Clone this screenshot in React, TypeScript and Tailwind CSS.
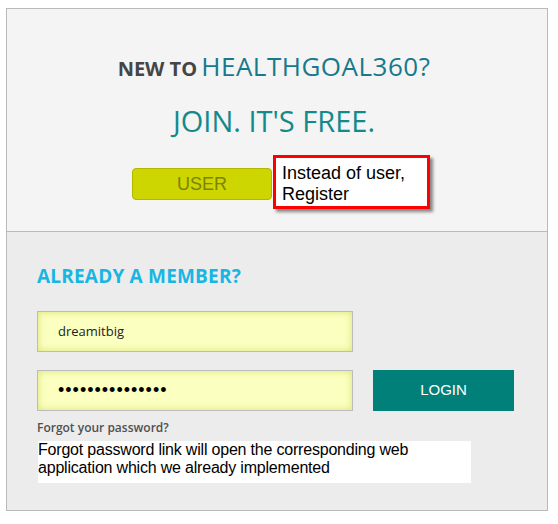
import React from "react";

const sans = "font-['Open_Sans','Noto_Sans',sans-serif]";
const arial = "font-['Liberation_Sans',Arial,sans-serif]";

const App = () => {
  return (
    <div className="w-[558px] h-[524px] bg-white pt-[8px] pl-[6px]">
      <div className="w-[542px] h-[503px] border border-[#b9b9b9] flex flex-col">
        {/* Join Section */}
        <section className="h-[222px] bg-[#f4f4f4] pt-[39px] flex flex-col">
          <h1 className={`${sans} text-center leading-[36px] pr-[6px]`}>
            <span className="text-[20px] font-bold text-[#454545]">NEW TO</span>{" "}
            <span className="text-[26px] text-[#16798c] tracking-[0.5px]">HEALTHGOAL360?</span>
          </h1>
          <h2 className={`${sans} mt-[13px] text-center text-[29px] leading-[40px] text-[#128a8c] pr-[6px]`}>
            JOIN. IT'S FREE.
          </h2>
          <div className="mt-[14px] flex items-start pl-[125px]">
            <button
              className={`${arial} mt-[13px] w-[140px] h-[32px] rounded-[4px] bg-[#cdd600] border border-[#b2b800] text-[18px] text-[#7d8300]`}
            >
              USER
            </button>
            {/* Annotation */}
            <div
              className={`${arial} ml-px w-[157px] h-[54px] border-[3px] border-[#ff0000] bg-white shadow-[3px_3px_3px_rgba(0,0,0,0.45)] pl-[6px] pt-[5px] text-[18px] leading-[21px] text-black`}
            >
              Instead of user,
              <br />
              Register
            </div>
          </div>
        </section>

        {/* Login Section */}
        <section className="flex-1 border-t border-[#b9b9b9] bg-[#ececec] pl-[30px] pt-[31px]">
          <h3 className={`${sans} text-[19px] leading-[26px] font-bold text-[#17b6e3] tracking-[0.2px]`}>
            ALREADY A MEMBER?
          </h3>
          <div
            className={`${sans} mt-[22px] w-[316px] h-[41px] border border-[#bcbcbc] bg-[#fbffc0] shadow-[inset_0_0_7px_rgba(215,222,110,0.9)] flex items-center pl-[20px] text-[13px] text-[#222]`}
          >
            dreamitbig
          </div>
          <div className="mt-[18px] flex items-center">
            <div
              className={`${arial} w-[316px] h-[41px] border border-[#bcbcbc] bg-[#fbffc0] shadow-[inset_0_0_7px_rgba(215,222,110,0.9)] flex items-center pl-[20px] text-[18px] tracking-[1px] text-black`}
            >
              •••••••••••••••
            </div>
            <button
              className={`${arial} ml-[20px] w-[141px] h-[41px] bg-[#018079] text-white text-[15px]`}
            >
              LOGIN
            </button>
          </div>
          <p className={`${sans} mt-[9px] text-[12px] leading-[16px] font-semibold text-[#505050]`}>
            Forgot your password?
          </p>
          {/* Annotation */}
          <div
            className={`${arial} mt-[5px] ml-px w-[433px] h-[42px] bg-white text-[16px] leading-[18px] tracking-[-0.2px] text-black`}
          >
            Forgot password link will open the corresponding web
            <br />
            application which we already implemented
          </div>
        </section>
      </div>
    </div>
  );
};

export default App;
